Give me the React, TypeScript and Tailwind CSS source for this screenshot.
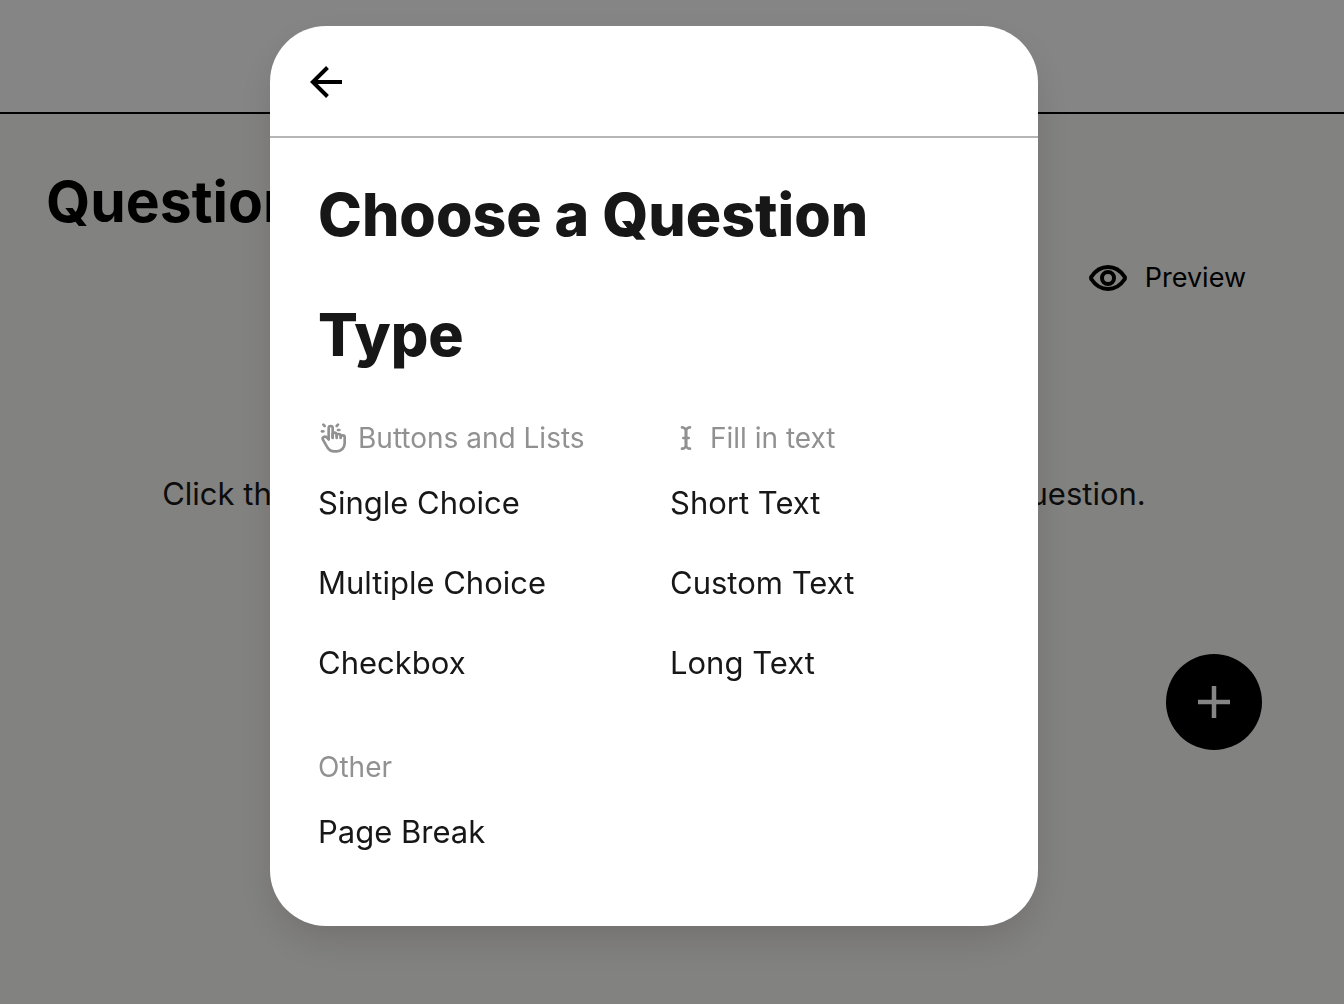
import type { ReactNode } from 'react'
import { TbCursorText, TbHandClick } from 'react-icons/tb'

const buttonTypes = ['Single Choice', 'Multiple Choice', 'Checkbox']
const textTypes = ['Short Text', 'Custom Text', 'Long Text']
const otherTypes = ['Page Break']

function ArrowLeftIcon() {
  return (
    <svg width="34" height="32" viewBox="0 0 34 32" fill="none" stroke="currentColor" strokeWidth="4" aria-hidden="true">
      <path d="M32 16H3" />
      <path d="M17.5 1.5 2.8 16l14.7 14.5" />
    </svg>
  )
}

function EyeIcon() {
  return (
    <svg width="38" height="26" viewBox="0 0 38 26" fill="none" stroke="currentColor" strokeWidth="4" aria-hidden="true">
      <path
        d="M2.6 14.5C5.6 19 11 24 19 24s13.4-5 16.4-9.5a2.6 2.6 0 0 0 0-3C32.4 7 27 2 19 2S5.6 7 2.6 11.5a2.6 2.6 0 0 0 0 3Z"
        strokeLinejoin="round"
      />
      <circle cx="19" cy="13" r="6" />
    </svg>
  )
}

function PlusIcon() {
  return (
    <svg width="32" height="32" viewBox="0 0 32 32" stroke="currentColor" strokeWidth="4.5" aria-hidden="true">
      <path d="M16 0v32M0 16h32" />
    </svg>
  )
}

type TypeGroupProps = {
  title: string
  icon?: ReactNode
  types: string[]
}

function TypeGroup({ title, icon, types }: TypeGroupProps) {
  return (
    <section>
      <h2 className="flex h-12 items-center gap-2 text-[28px] text-[#919191]">
        {icon}
        {title}
      </h2>
      <ul className="mt-px">
        {types.map((type) => (
          <li key={type}>
            <button type="button" className="flex h-20 w-full items-center text-left text-[31px] text-[#171717]">
              {type}
            </button>
          </li>
        ))}
      </ul>
    </section>
  )
}

function QuestionsPage() {
  return (
    <div className="min-h-screen bg-[#faf9f7] text-black">
      <header className="h-[114px] border-b-2 border-black bg-white" />
      <main className="pt-12 pr-[82px] pl-[46px]">
        <h1 className="text-[57px] leading-20 font-bold">Questions</h1>
        <div className="flex justify-end pt-3 pr-4">
          <button type="button" className="flex items-center gap-[18px] text-[27px] leading-12">
            <EyeIcon />
            Preview
          </button>
        </div>
        <p className="mt-[168px] text-center text-[31px] leading-12 whitespace-nowrap text-[#171717]">
          Click the black button on the bottom right to create a new question.
        </p>
        <div className="mt-[136px] flex justify-end">
          <button
            type="button"
            aria-label="Add question"
            className="flex size-24 items-center justify-center rounded-full bg-black text-white"
          >
            <PlusIcon />
          </button>
        </div>
      </main>
    </div>
  )
}

function QuestionTypeModal() {
  return (
    <div className="fixed inset-0 flex items-start justify-center bg-black/48 pt-[26px] pr-9">
      <div
        role="dialog"
        aria-modal="true"
        aria-labelledby="question-type-title"
        className="w-full max-w-3xl rounded-[56px] bg-white pb-[54px] shadow-[0_16px_40px_-4px_rgba(0,0,0,0.15)]"
      >
        <div className="flex h-28 items-center border-b-2 border-[#b5b5b5] px-10 pt-0.5">
          <button type="button" aria-label="Go back" className="text-black">
            <ArrowLeftIcon />
          </button>
        </div>
        <div className="px-12 pt-[17px]">
          <h1 id="question-type-title" className="max-w-[600px] text-[59px] leading-[120px] font-extrabold text-[#171717]">
            Choose a Question Type
          </h1>
          <div className="mt-[19px] grid grid-cols-2 gap-x-8">
            <TypeGroup title="Buttons and Lists" icon={<TbHandClick size={32} />} types={buttonTypes} />
            <TypeGroup title="Fill in text" icon={<TbCursorText size={32} />} types={textTypes} />
          </div>
          <div className="mt-10">
            <TypeGroup title="Other" types={otherTypes} />
          </div>
        </div>
      </div>
    </div>
  )
}

export default function App() {
  return (
    <div className="font-['Inter',sans-serif]">
      <QuestionsPage />
      <QuestionTypeModal />
    </div>
  )
}
